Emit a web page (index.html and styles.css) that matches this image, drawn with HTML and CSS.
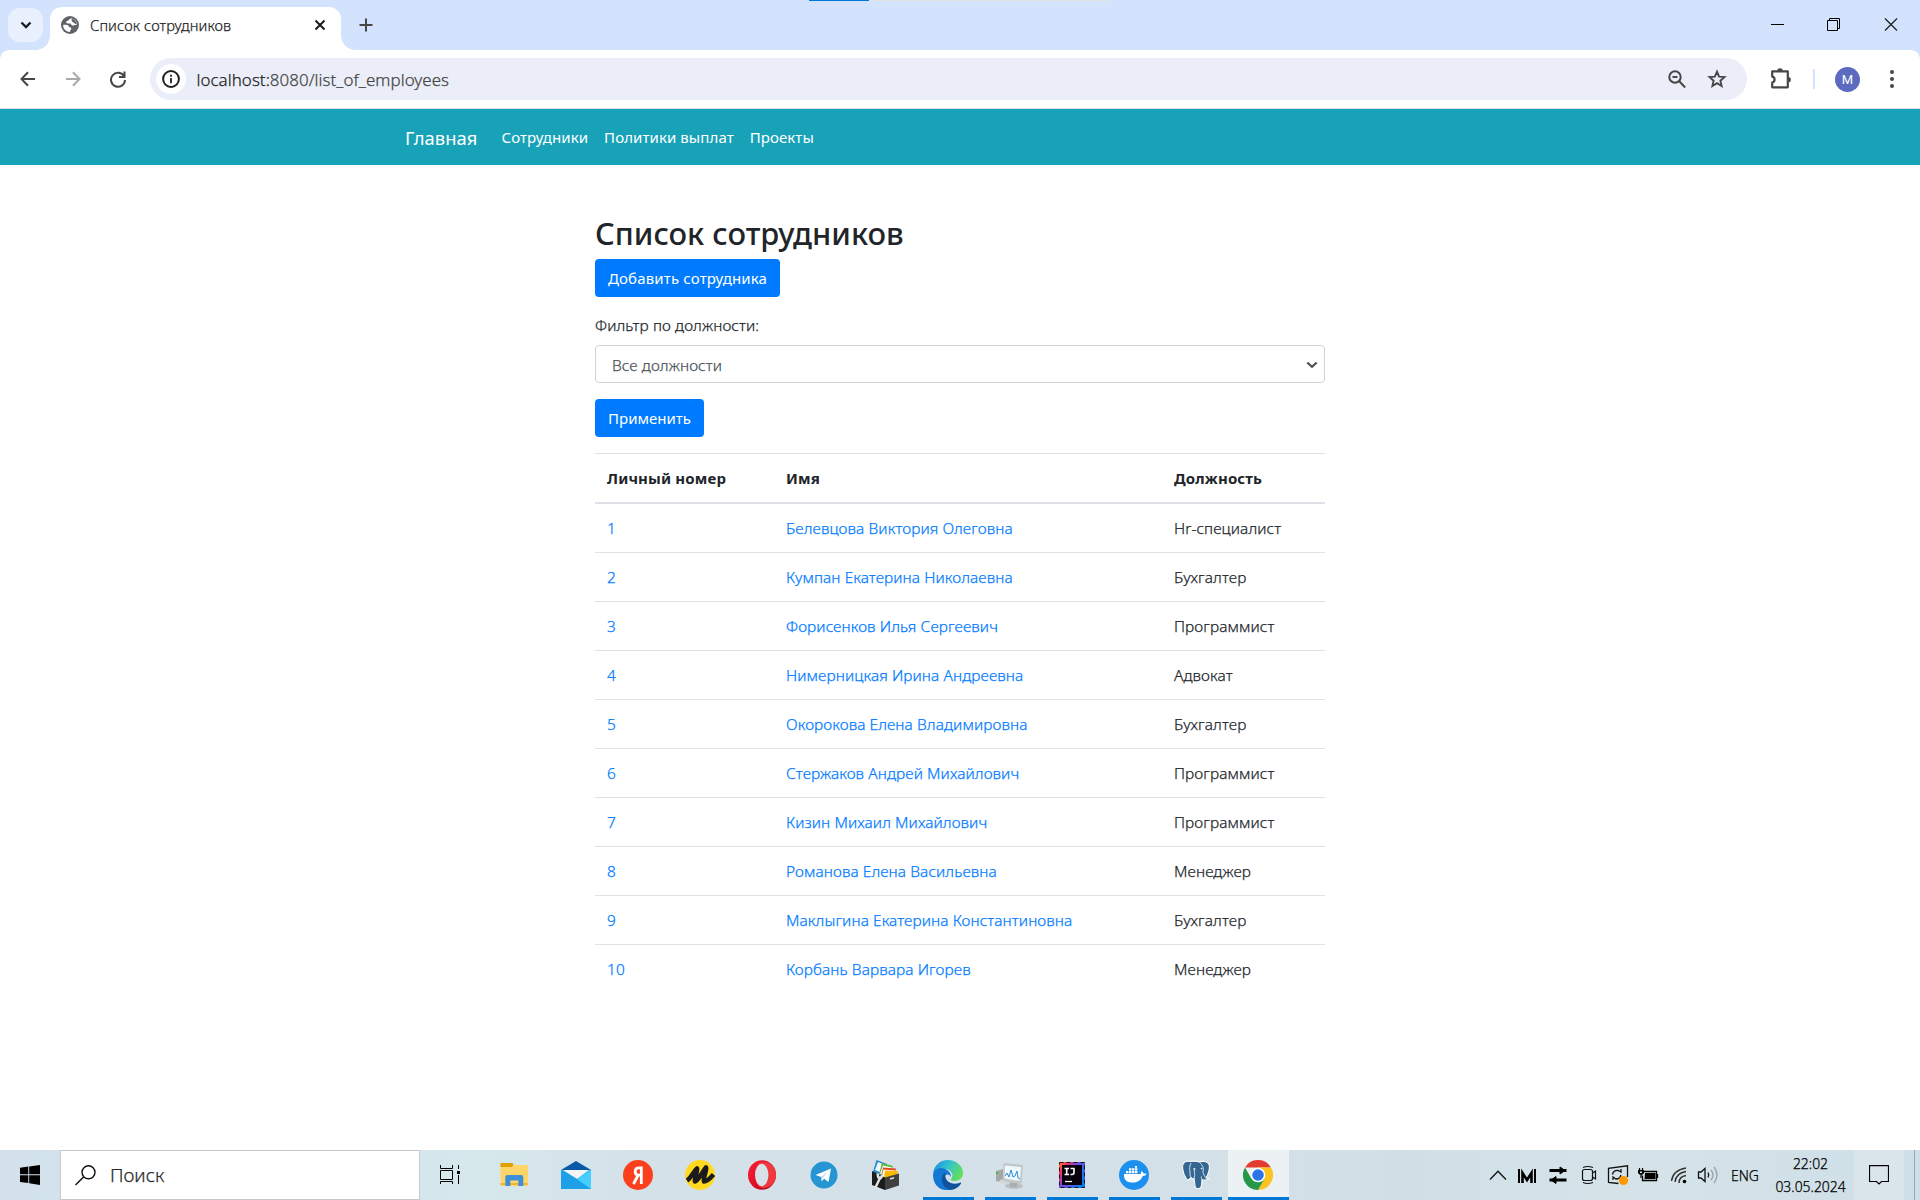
FILE: index.html
```html
<!DOCTYPE html>
<html lang="ru">
<head>
<meta charset="utf-8">
<title>Список сотрудников</title>
<link rel="stylesheet" href="styles.css">
</head>
<body>
<div class="progress-line"></div>
<header class="tabstrip">
  <div class="tab-search"><svg width="12" height="8" viewBox="0 0 12 8"><path d="M1.500 1.500 6 6l4.500-4.500" fill="none" stroke="#1b1c1f" stroke-width="2.300"/></svg></div>
  <div class="tab">
    <svg class="tab-globe" width="18" height="18" viewBox="0 0 18 18"><circle cx="9" cy="9" r="9" fill="#5f6368"/><path d="M10.800 2.200C8.500 2.600 8 3.500 7.400 4.500 6 4.700 5 5.500 5.200 6.700c.8 1 2.700.5 4.500.8.5 1.700 1.800 2.300 3.300 1.900 1-.4 2-.6 3-.3A7 7 0 0 0 10.800 2.200z" fill="#fff"/><path d="M2 9c2-.6 4-.4 5.300.3.400 1 .2 1.700 1.500 2 1.500.2 2 1 1.200 2.200-.6.700-1 1.300-.9 2.500A7 7 0 0 1 2 9z" fill="#fff"/><path d="M11 2.500c2.500.8 4.700 3 4.900 6-1.600-.1-1.800-1.500-3.300-1.800C12 5.500 9.500 5.500 11 2.500z" fill="#5f6368"/></svg>
    <span class="tab-title">Список сотрудников</span>
    <svg class="tab-close" width="12" height="12" viewBox="0 0 12 12"><path d="M1.500 1.500l9 9m0-9l-9 9" stroke="#1b1c1f" stroke-width="2"/></svg>
  </div>
  <svg class="new-tab" width="14" height="14" viewBox="0 0 14 14"><path d="M7 .5v13M.5 7h13" stroke="#474747" stroke-width="2"/></svg>
  <div class="window-buttons">
    <svg width="57" height="50" viewBox="0 0 57 50"><path d="M22 24.500h13" stroke="#000"/></svg>
    <svg width="57" height="50" viewBox="0 0 57 50"><path d="M21.500 20.500h10v10h-10zM23.500 20v-1.500h10v10H32" fill="none" stroke="#000"/></svg>
    <svg width="57" height="50" viewBox="0 0 57 50"><path d="M22 18.500l12 12m0-12l-12 12" stroke="#1b1c1f" stroke-width="1.200"/></svg>
  </div>
</header>
<div class="toolbar">
  <svg class="nav-icon" width="16" height="16" viewBox="0 0 16 16"><path d="M15 8H2M8 1.200 1.500 8 8 14.800" fill="none" stroke="#474747" stroke-width="2"/></svg>
  <svg class="nav-icon" width="16" height="16" viewBox="0 0 16 16"><path d="M1 8h13M8 1.200 14.500 8 8 14.800" fill="none" stroke="#a9a9a9" stroke-width="2"/></svg>
  <svg class="nav-icon reload" width="18" height="18" viewBox="0 0 18 18"><path d="M15.200 6.500A7 7 0 1 0 16 10M15.500 1.500v5.500H10" fill="none" stroke="#474747" stroke-width="2"/></svg>
  <div class="omnibox">
    <div class="site-info"><svg width="18" height="18" viewBox="0 0 18 18"><circle cx="9" cy="9" r="7.900" fill="none" stroke="#1f1f1f" stroke-width="2"/><path d="M9 8v5.200M9 4.700v2" stroke="#1f1f1f" stroke-width="1.800"/></svg></div>
    <span class="url"><b>localhost:</b>8080/list_of_employees</span>
    <svg class="zoom-icon" width="18" height="19" viewBox="0 0 18 19"><circle cx="7" cy="7" r="5.700" fill="none" stroke="#474747" stroke-width="2"/><path d="M4.500 7h5M11 11l6.200 6.500" stroke="#474747" stroke-width="2"/></svg>
    <svg class="star" width="20" height="20" viewBox="0 0 20 20"><path d="M10 2.600l2.100 5 5.400.5-4.100 3.600 1.200 5.300-4.600-2.800L5.400 17l1.200-5.300L2.500 8.100l5.400-.5z" fill="none" stroke="#474747" stroke-width="1.900"/></svg>
  </div>
  <svg class="puzzle" width="22" height="22" viewBox="0 0 22 22"><path d="M2.200 3.300h15.600v16H2.200v-4.800c3.200-.5 3.200-5.400 0-5.900z" fill="none" stroke="#474747" stroke-width="2.200" stroke-linejoin="round"/><path d="M7.200 3a2.800 2.800 0 0 1 5.600 0zM18.200 9a2.600 2.600 0 0 1 0 5.300z" fill="#474747"/></svg>
  <i class="separator"></i>
  <div class="avatar">M</div>
  <svg class="kebab" width="4" height="20" viewBox="0 0 4 20"><g fill="#474747"><circle cx="2" cy="3" r="2"/><circle cx="2" cy="10" r="2"/><circle cx="2" cy="17" r="2"/></g></svg>
</div>

<div class="page">
  <nav class="navbar">
    <div class="container">
      <a class="brand">Главная</a><a class="nav-link">Сотрудники</a><a class="nav-link">Политики выплат</a><a class="nav-link">Проекты</a>
    </div>
  </nav>
  <main class="content">
    <h2>Список сотрудников</h2>
    <a class="btn btn-add">Добавить сотрудника</a>
    <label>Фильтр по должности:</label>
    <div class="select"><span>Все должности</span><svg width="12" height="8" viewBox="0 0 12 8"><path d="M1.300 1.500 6 5.700l4.700-4.200" fill="none" stroke="#495057" stroke-width="2.200"/></svg></div>
    <a class="btn btn-apply">Применить</a>
    <table>
      <thead><tr><th class="col-id">Личный номер</th><th class="col-name">Имя</th><th>Должность</th></tr></thead>
      <tbody>
        <tr><td><a>1</a></td><td><a>Белевцова Виктория Олеговна</a></td><td>Hr-специалист</td></tr>
        <tr><td><a>2</a></td><td><a>Кумпан Екатерина Николаевна</a></td><td>Бухгалтер</td></tr>
        <tr><td><a>3</a></td><td><a>Форисенков Илья Сергеевич</a></td><td>Программист</td></tr>
        <tr><td><a>4</a></td><td><a>Нимерницкая Ирина Андреевна</a></td><td>Адвокат</td></tr>
        <tr><td><a>5</a></td><td><a>Окорокова Елена Владимировна</a></td><td>Бухгалтер</td></tr>
        <tr><td><a>6</a></td><td><a>Стержаков Андрей Михайлович</a></td><td>Программист</td></tr>
        <tr><td><a>7</a></td><td><a>Кизин Михаил Михайлович</a></td><td>Программист</td></tr>
        <tr><td><a>8</a></td><td><a>Романова Елена Васильевна</a></td><td>Менеджер</td></tr>
        <tr><td><a>9</a></td><td><a>Маклыгина Екатерина Константиновна</a></td><td>Бухгалтер</td></tr>
        <tr><td><a>10</a></td><td><a>Корбань Варвара Игорев</a></td><td>Менеджер</td></tr>
      </tbody>
    </table>
  </main>
</div>

<footer class="taskbar">
  <div class="start"><svg width="20" height="20" viewBox="0 0 20 20"><path d="M0 2.800 8.300 1.600v7.700H0zM9.200 1.500 20 0v9.300H9.200zM0 10.200h8.300v7.900L0 17zM9.200 10.200H20V20L9.200 18.300z"/></svg></div>
  <div class="search"><svg width="21" height="21" viewBox="0 0 21 21"><circle cx="13.500" cy="7.300" r="6.500" fill="none" stroke="#111" stroke-width="1.400"/><path d="M8.800 11.800.5 20" stroke="#111" stroke-width="1.500"/></svg><span>Поиск</span></div>
  <div class="taskview"><svg width="20" height="20" viewBox="0 0 20 20"><path d="M.5 5.500h12v9H.5zM.5 0v3.500h12V0M.5 19v-2.500h12V19M18.500 0v4M18.500 10v9" fill="none" stroke="#000"/><path d="M17 6h3v3h-3z"/></svg></div>
  <div class="apps">
    <div class="app"><svg width="30" height="30" viewBox="0 0 30 30"><path d="M1.500 3h12l1 2-1 2h-12z" fill="#e0a000"/><path d="M1.500 7h11.500l2-2h14v20q0 1-1 1h-25.500q-1 0-1-1z" fill="#ffd469"/><path d="M1.500 23h27v2h-27z" fill="#ebb63f"/><path d="M6.300 26V17q0-2 2-2h14q2 0 2 2v9h-5v-5.500h-8V26z" fill="#3f8fd8"/></svg></div>
    <div class="app"><svg width="30" height="30" viewBox="0 0 30 30"><path d="M0 10 15 1l15 9v5H0z" fill="#0759a8"/><path d="M0 10h30v19H0z" fill="#27b2f0"/><path d="M2 10h26L16 19z" fill="#f4f4f4"/><path d="M0 10v19h30L16 19z" fill="#1f9fe6"/><path d="M30 10v19L16 19z" fill="#45ceff"/></svg></div>
    <div class="app"><svg width="30" height="30" viewBox="0 0 30 30"><circle cx="15" cy="15" r="15" fill="#fc3f1d"/><path d="M18.300 7.900h-2.100c-2.700 0-4 1.300-4 3.700 0 2.300 1.200 3.600 3.600 3.600h2.500M15.200 15 10.500 24M18.300 6.500V24" fill="none" stroke="#fff" stroke-width="2.800"/></svg></div>
    <div class="app"><svg width="30" height="30" viewBox="0 0 30 30"><circle cx="15" cy="15" r="15" fill="#ffd91f"/><path d="M2 20.500C6 18 9 11 12 8.500c1 3-3 9-2 13 4-2 7-9 11-14 1 4-3 9-2 14 3 0 6-3 9.500-7" fill="none" stroke="#1b1b1b" stroke-width="4.600" stroke-linejoin="round"/></svg></div>
    <div class="app"><svg width="30" height="30" viewBox="0 0 30 30"><defs><linearGradient id="opera" x1="0" y1="0" x2="1" y2="1"><stop offset="0" stop-color="#ff2038"/><stop offset=".5" stop-color="#e0102a"/><stop offset="1" stop-color="#a70014"/></linearGradient></defs><ellipse cx="15" cy="15" rx="14" ry="14.700" fill="url(#opera)"/><path d="M11 4.500C16-1 29 3 29 15s-13 16-18 10.500z" fill="#f0393f"/><ellipse cx="14.700" cy="15" rx="6.700" ry="11.300" fill="#d6e1e9"/></svg></div>
    <div class="app"><svg width="30" height="30" viewBox="0 0 30 30"><circle cx="15" cy="15" r="13.500" fill="#2595d3"/><path d="M6.500 15 22 8.500 19.500 22l-4.300-3.200-2.500 2.500-.5-4.200z" fill="#fff"/><path d="M12.200 17 19 11.500l-5.500 6.500-.8 3.300z" fill="#b8d6e8"/></svg></div>
    <div class="app"><svg width="30" height="30" viewBox="0 0 30 30"><path d="M5.500 0 16 4l-4 12L2 12z" fill="#2889cf"/><path d="M7 2l7 3-3 8-7-3z" fill="#edf8ff"/><path d="M11 3l11 3-3 11-11-3z" fill="#59b938"/><path d="M12 5.500l9 2-2 9-10-3z" fill="#fff"/><path d="M12 7.500l13 1-2 10-13-1z" fill="#e54825"/><path d="M12.500 9.500l12 1-2 8-12-1z" fill="#fff"/><path d="M14 10.500l13 .5-2 8-12-1z" fill="#ffb800"/><path d="M1 11l13 6.500V30L1 25z" fill="#1c1c1c"/><path d="M14 17.500 28 13.500v12L14 30z" fill="#404040"/><path d="M19 19l4-1.200" stroke="#ddd" stroke-width="1.500"/><path d="M4 28.500 9 18M6.500 13.500l.7 3.700 2.500.8 1.800-2.500" fill="none" stroke="#e0e4e6" stroke-width="2.400"/></svg></div>
    <div class="app running"><svg width="30" height="30" viewBox="0 0 30 30"><defs><linearGradient id="edge-top" x1="0" y1=".2" x2="1" y2=".6"><stop offset="0" stop-color="#1c8fdb"/><stop offset=".45" stop-color="#32c2d3"/><stop offset="1" stop-color="#66e052"/></linearGradient></defs><path d="M0 15C0 6 7 0 15 0s15 6 15 13c0 5-4 8-8 8-3 0-5-1-4-2 4-5-1-10-7-10S0 12 0 15z" fill="url(#edge-top)"/><path d="M0 15C1 8 9 6 14 10c3 2 4 4 4 7-2-4-7-3-7 2 0 5 4 8 9 10C9 33 0 26 0 15z" fill="#1378d2"/><path d="M11.500 13C7 17 8 27 17 30c5 0 9-3 11-6.500.4-1-.3-1.200-1-.8C19 26 11 21 12.500 14z" fill="#11529c"/></svg></div>
    <div class="app running"><svg width="30" height="30" viewBox="0 0 30 30"><path d="M1 11l7-2v14l-7-2z" fill="#a3a7a8"/><path d="M1 12h2v2H1z" fill="#34c52e"/><path d="M3 22l9 4 4-3-9-4z" fill="#d5d8d9"/><ellipse cx="19" cy="26" rx="9" ry="3" fill="#bcc0c2"/><path d="M15 22l7 1v4h-7z" fill="#a8adaf"/><path d="M8.500 3 28 5l-1.500 19L8 21z" fill="#c2c6c8"/><path d="M10 5.500 26 7l-1 14-15.500-2.500z" fill="#eef8ff"/><path d="M10 16l2-3 2 4 2-7 2 7 2-1 2-5 1 7 2 1" fill="none" stroke="#328bc6"/></svg></div>
    <div class="app running"><svg width="30" height="30" viewBox="0 0 30 30"><defs><linearGradient id="idea" x1="0" y1="0" x2="1" y2=".7"><stop offset="0" stop-color="#ff8b18"/><stop offset=".22" stop-color="#fe315d"/><stop offset=".5" stop-color="#7449e8"/><stop offset="1" stop-color="#087cfa"/></linearGradient></defs><path d="M2 2h26v26H2z" fill="url(#idea)"/><path d="M2.500 2.500h25v25h-25z" fill="none" stroke="#161616" stroke-dasharray="4 3"/><path d="M5 5h20v20H5z" fill="#08000c"/><path d="M7.500 8.500h4.500M9.700 8v7M7.500 14.500H12M13.500 8.500H17v4q0 2-2 2h-1.500" fill="none" stroke="#fff" stroke-width="1.600"/><path d="M8 21.500h7" stroke="#fff" stroke-width="1.300"/></svg></div>
    <div class="app running"><svg width="30" height="30" viewBox="0 0 30 30"><circle cx="15" cy="15" r="15" fill="#1d8fee"/><path d="M5 14h16.500c.8-.7.8-2 .3-3 1.700.5 2.500 1.500 2.800 2.600 1-.2 2-.1 3 .4-.8 1.400-2 1.900-3.800 1.900C22 20.500 18 22.500 13.500 22.500 8 22.500 4.500 20 5 14z" fill="#fff"/><path d="M7 11h2.400v2.300H7zM10 11h2.400v2.300H10zM13 11h2.400v2.300H13zM16 11h2.400v2.300H16zM10 8.300h2.400v2.200H10zM13 8.300h2.400v2.200H13zM16 8.300h2.400v2.200H16zM16 6h2v1.800h-2z" fill="#fff"/></svg></div>
    <div class="app running"><svg width="30" height="30" viewBox="0 0 30 30"><path d="M9 1.500C4 .5 1 3 1.500 8c.5 4 2 8 4 11 1.500 2 3 0 4.500-1.500.8 1 2 1.500 3.200 1.200L14 26c.3 4 6 3.500 6.500-.5l.5-6c3 1.500 5 .5 7-1-1 0-2.500 0-3-.6 2.500-4 4-10 3.300-13C26.500 1 21.500.8 18.500 2 15.500 1 12 1 9 1.500z" fill="#336791" stroke="#f7fafb" stroke-width="1.100"/><path d="M10 3c-1.500 3-1.500 6-1 9 .2 2-.2 4 1 5.500M13 18c2-3-1-6 1-10M18.500 2.500C21.500 5 23 8 22 11c-.5 2 1 4 2.500 6.500M21 19c-.7-.8-1-1.500-.6-2.500" fill="none" stroke="#f7fafb" stroke-width=".8"/><circle cx="13" cy="9" r=".8" fill="#fff"/><circle cx="20.500" cy="8.500" r=".8" fill="#fff"/></svg></div>
    <div class="app running active"><svg width="30" height="30" viewBox="0 0 30 30"><path d="M2 7.500a15 15 0 0 1 26 0H15z" fill="#e33b2e"/><path d="M28 7.500A15 15 0 0 1 15 30l6.500-11.200L15 7.500z" fill="#fcc31e"/><path d="M2 7.500A15 15 0 0 0 15 30l6.500-11.200-13 0z" fill="#279847"/><circle cx="15" cy="15" r="7.300" fill="#fff"/><circle cx="15" cy="15" r="5.800" fill="#2b74e8"/></svg></div>
  </div>
  <div class="tray">
    <svg width="28" height="50" viewBox="1484 0 28 50"><path d="M1490 29.500l8-8.300 8 8.300" fill="none" stroke="#111" stroke-width="1.300"/></svg>
    <svg width="30" height="50" viewBox="1512 0 30 50"><path d="M1519 19v14M1535 19v14" stroke="#000" stroke-width="2"/><path d="M1522.500 33v-10l4.500 7 4.500-7v10" fill="none" stroke="#000" stroke-width="2.600"/></svg>
    <svg width="32" height="50" viewBox="1542 0 32 50"><path d="M1549.500 20.500h17M1549.500 30h17" stroke="#000" stroke-width="2.800"/><path d="M1560 17l5 3.500-5 3.500zM1556 26.500l-5 3.500 5 3.500z" stroke="#000"/></svg>
    <svg width="28" height="50" viewBox="1574 0 28 50"><path d="M1584.500 19.500h6q2 0 2 2v7q0 2-2 2h-6q-2 0-2-2v-7q0-2 2-2zM1592.500 23l3-2v8l-3-2M1583 17.500q4.500-2 10 0M1583 32.500q4.500 2 10 0" fill="none" stroke="#111" stroke-width="1.200"/></svg>
    <svg width="31" height="50" viewBox="1602 0 31 50"><path d="M1627.500 27V15.800l-19 2.500v14l10 1.200M1612.500 24.500q1-4.500 5.500-4l3 1.500v-3M1621 25q-1 4-5 4l-3-2v3" fill="none" stroke="#111" stroke-width="1.300"/><circle cx="1623.500" cy="30.500" r="4.600" fill="#ff9800"/></svg>
    <svg width="31" height="50" viewBox="1633 0 31 50"><path d="M1642.500 21.500h14v9h-14v-5M1657.500 24v4" fill="none" stroke="#000" stroke-width="1.300"/><path d="M1645 23h10.500v6H1644.500zM1638 20h6v3q-1 2-3 2t-3-2z"/><path d="M1639.500 18v2M1642.500 18v2M1641 25v3" stroke="#000" stroke-width="1.200"/><path d="M1640 21.500h2v1.500h-2z" fill="#d5e1e8"/></svg>
    <svg width="28" height="50" viewBox="1664 0 28 50"><path d="M1671.500 31Q1673 20 1686 18M1675 32Q1676 23 1686 21.500M1679 33Q1679 26.500 1686 25.500" fill="none" stroke="#333" stroke-width="1.400"/><circle cx="1684.500" cy="31.500" r="1.800"/></svg>
    <svg width="32" height="50" viewBox="1692 0 32 50"><path d="M1698.500 22h2.500l4-3.500v13l-4-3.500h-2.500zM1708 22.500q1.500 2.500 0 5" fill="none" stroke="#111" stroke-width="1.300"/><path d="M1711 20q4 5 0 10M1714 17q6 8 0 16" fill="none" stroke="#98a2a8" stroke-width="1.300"/></svg>
    <span class="lang">ENG</span>
    <div class="clock"><span class="time">22:02</span><span>03.05.2024</span></div>
    <div class="notify"><svg width="20" height="20" viewBox="0 0 20 20"><path d="M.5.700h19v15.800h-7L10 19l-2.500-2.500h-7z" fill="none" stroke="#000" stroke-width="1.200"/></svg></div>
    <i class="show-desktop"></i>
  </div>
</footer>
</body>
</html>
```
FILE: styles.css
```css
* { box-sizing: border-box; }
body {
  margin: 0;
  width: 1920px;
  height: 1200px;
  overflow: hidden;
  display: flex;
  flex-direction: column;
  background: #fff;
  color: #212529;
  font: 400 15px/24px "Noto Sans", "Open Sans", sans-serif;
}
svg { display: block; flex: none; }

/* thin interface text, slightly strengthened */
.tab-title, .url, .search, .tray, label, .select, td {
  font-weight: 300;
  -webkit-text-stroke: .25px currentColor;
}

/* browser chrome */
.progress-line {
  position: absolute;
  left: 809px;
  top: 0;
  width: 301px;
  height: 1px;
  background: linear-gradient(90deg, #0078d7 60px, #e3e3e3 60px);
}
.tabstrip {
  height: 50px;
  flex: none;
  display: flex;
  align-items: center;
  padding-left: 8px;
  background: #d3e3fd;
}
.tab-search {
  width: 35px;
  height: 34px;
  border-radius: 12px;
  background: #e9f0fe;
  display: flex;
  align-items: center;
  justify-content: center;
}
.tab {
  position: relative;
  width: 291px;
  height: 43px;
  margin: 7px 0 0 7px;
  padding: 0 15px 7px 11px;
  border-radius: 12px 12px 0 0;
  background: #fff;
  display: flex;
  align-items: center;
}
.tab::before, .tab::after {
  content: "";
  position: absolute;
  bottom: 0;
  width: 14px;
  height: 14px;
}
.tab::before { left: -14px; background: radial-gradient(circle at 0 0, transparent 13.5px, #fff 14px); }
.tab::after { right: -14px; background: radial-gradient(circle at 100% 0, transparent 13.5px, #fff 14px); }
.tab-title { margin-left: 11px; font-size: 14.7px; letter-spacing: .1px; color: #1f1f1f; }
.tab-close { margin-left: auto; }
.new-tab { margin-left: 17.5px; }
.window-buttons { display: flex; margin-left: auto; }

.toolbar {
  position: relative;
  height: 59px;
  flex: none;
  display: flex;
  align-items: center;
  padding: 0 19px 0 20px;
  background: #fff;
  border-bottom: 1px solid #dedfe1;
}
.toolbar::before, .toolbar::after {
  content: "";
  position: absolute;
  top: 0;
  width: 9px;
  height: 9px;
}
.toolbar::before { left: 0; background: radial-gradient(circle at 100% 100%, transparent 8.5px, #d3e3fd 9px); }
.toolbar::after { right: 0; background: radial-gradient(circle at 0 100%, transparent 8.5px, #d3e3fd 9px); }
.nav-icon { margin-right: 28.5px; }
.nav-icon.reload { margin-right: 23px; }
.omnibox {
  width: 1597px;
  height: 42px;
  padding: 0 20px 0 6px;
  border-radius: 21px;
  background: #ebeef8;
  display: flex;
  align-items: center;
}
.site-info {
  width: 30px;
  height: 30px;
  border-radius: 50%;
  background: #fff;
  display: flex;
  align-items: center;
  justify-content: center;
}
.url { margin-left: 10.5px; padding-top: 2px; font-size: 16.9px; letter-spacing: .06px; color: #474747; }
.url b { font-weight: inherit; color: #1f1f1f; }
.zoom-icon { margin-left: auto; }
.star { margin-left: 21px; }
.puzzle { margin-left: 23px; }
.separator { width: 2px; height: 20px; margin-left: 21px; background: #d3e3fd; }
.avatar {
  width: 25px;
  height: 25px;
  margin-left: 20px;
  border-radius: 50%;
  background: #5c6bc0;
  color: #fff;
  font: 13px/25px Roboto, sans-serif;
  text-align: center;
}
.kebab { margin-left: auto; margin-right: 7px; }

/* application page */
.page { height: 1041px; flex: none; }
.navbar { height: 56px; background: #17a2b8; color: #fff; }
.container {
  width: 1140px;
  height: 56px;
  margin: 0 auto;
  padding: 0 15px;
  display: flex;
  align-items: center;
}
.brand { width: 72px; margin-right: 16.5px; padding-top: 2px; font-size: 18.4px; }
.nav-link { padding: 0 8px; letter-spacing: .08px; }
.content {
  width: 730px;
  margin: 49px auto 0;
  display: flex;
  flex-direction: column;
  align-items: flex-start;
}
h2 { margin: 0 0 7px; font-size: 30.8px; font-weight: 500; line-height: 38px; }
.btn {
  height: 38px;
  border-radius: 4px;
  background: #007bff;
  color: #fff;
  line-height: 38px;
  text-align: center;
}
.btn-add { width: 185px; letter-spacing: .16px; }
.btn-apply { width: 109px; }
label { margin: 17px 0 7px; }
.select {
  width: 100%;
  height: 38px;
  margin-bottom: 16px;
  padding: 2px 6px 0 16px;
  border: 1px solid #ced4da;
  border-radius: 4px;
  color: #495057;
  display: flex;
  align-items: center;
  justify-content: space-between;
}
.select span { padding-top: 2px; }
table { width: 100%; margin-top: 16px; table-layout: fixed; border-collapse: collapse; }
th, td { border-top: 1px solid #dee2e6; text-align: left; }
th { padding: 12px; border-bottom: 2px solid #dee2e6; font-weight: 700; letter-spacing: .15px; }
td { padding: 13px 12px 11px; }
td a { color: #007bff; }
.col-id { width: 179px; }
.col-name { width: 388px; }
label, td, .select { font-size: 15.4px; letter-spacing: .1px; }

/* system taskbar */
.taskbar {
  height: 50px;
  flex: none;
  display: flex;
  background: linear-gradient(90deg, #d2e1eb 0, #d5e7ec 430px, #d6e8ec 480px, #d5e1e9 650px, #d4e0e8 1290px, #d0dfe6 1400px, #d5e3e9 1620px, #cfdfe7 1920px);
  color: #000;
}
.start, .taskview { width: 60px; display: flex; align-items: center; justify-content: center; }
.search {
  width: 360px;
  border: 1px solid #c6c8ca;
  background: #fff;
  display: flex;
  align-items: center;
  padding-left: 14px;
  color: #2b2b2b;
  font-size: 18.9px;
}
.search span { margin-left: 14px; }
.apps { display: flex; gap: 1px; margin-left: 3px; }
.app { position: relative; width: 61px; display: flex; align-items: center; justify-content: center; }
.app.running::after {
  content: "";
  position: absolute;
  bottom: 0;
  left: 6px;
  right: 4px;
  height: 3px;
  background: #0078d7;
}
.app.active { margin-left: 1px; padding-right: 2px; background: #ecf1f4; }
.app.active::after { left: 0; right: 0; }
.tray { display: flex; margin-left: auto; font-size: 13.9px; }
.lang { width: 44px; padding-left: 7px; line-height: 51px; }
.clock { width: 85px; margin-right: 1px; display: flex; flex-direction: column; align-items: center; line-height: 23px; padding-top: 2px; }
.notify { width: 50px; background: #dae5eb; display: flex; justify-content: center; padding-top: 15px; }
.show-desktop { width: 16px; background: linear-gradient(90deg, transparent 10px, #9aabb5 10px, #9aabb5 11px, transparent 11px); }
```
